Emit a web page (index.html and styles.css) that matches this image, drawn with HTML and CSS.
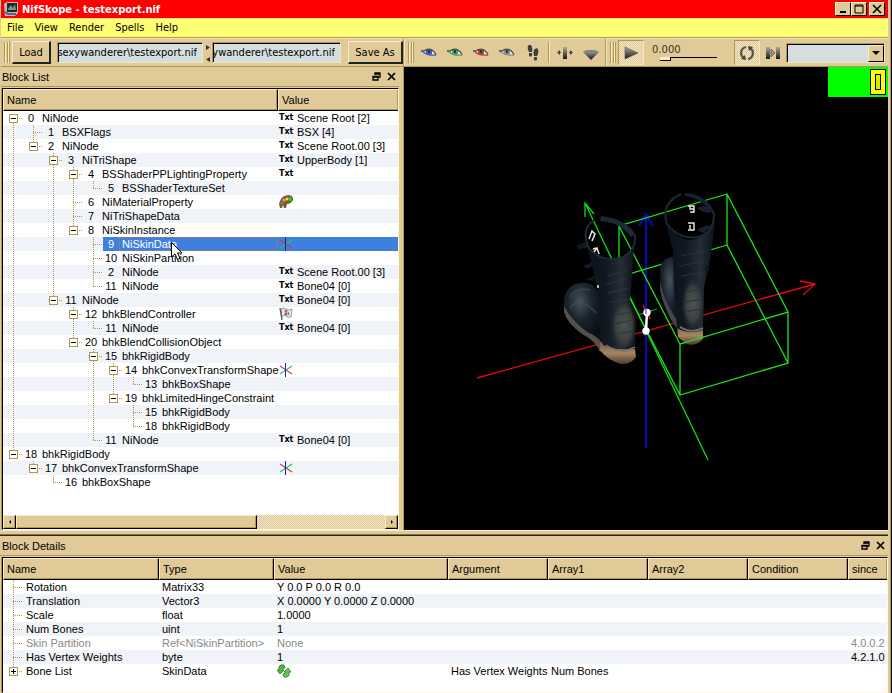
FILE: index.html
```html
<!DOCTYPE html>
<html lang="en">
<head>
    <meta charset="UTF-8">
    <meta name="viewport" content="width=device-width, initial-scale=1.0">
    <title>NifSkope - testexport.nif</title>
    <link rel="stylesheet" href="styles.css">
</head>
<body>
<svg width="0" height="0" class="defs">
    <symbol id="eye" viewBox="0 0 16 10">
        <path d="M1 3Q7 0 12 3L15 7Q8 8 4 6Z" fill="#e4e8ec"/>
        <path d="M5 2H11V6Q8 8 5 6Z" fill="currentColor"/>
        <path d="M0 3H3Q7 0 11 2Q14 4 15 7" fill="none" stroke="#454848" stroke-width="1.3"/>
        <path d="M2 4Q7 8 15 7" fill="none" stroke="currentColor" stroke-width="1.3"/>
        <path d="M7 2H9V5H7Z" fill="#333"/>
    </symbol>
    <symbol id="float" viewBox="0 0 9 9">
        <path d="M3 3V1H8V5H6M3 2H8M1 4.500H6V8H1ZM1 5H6" fill="none" stroke="#000" stroke-width="1.300"/>
    </symbol>
    <symbol id="close" viewBox="0 0 9 9">
        <path d="M1 1L8 8M8 1L1 8" stroke="#000" stroke-width="1.700"/>
    </symbol>
    <symbol id="axes" viewBox="0 0 14 14">
        <path d="M1 3L13 11" stroke="#e03050" stroke-width="1.200"/>
        <path d="M1 11L13 3" stroke="#20c860" stroke-width="1.200"/>
        <path d="M6.500 0V14" stroke="#2020b8"/>
    </symbol>
    <symbol id="palette" viewBox="0 0 14 14">
        <path d="M1 6Q3 0 10 0Q15 1 14 5Q12 9 8 9L7 13H5L4 10L3 13H1L0 9Z" fill="#7b5c28"/>
        <circle cx="3" cy="8" r="1.500" fill="#5588a0"/>
        <circle cx="5" cy="5" r="1.500" fill="#ef9a90"/>
        <circle cx="8" cy="4" r="1.500" fill="#f3e230"/>
        <circle cx="11" cy="4" r="2" fill="#35c835"/>
    </symbol>
    <symbol id="flag" viewBox="0 0 14 14">
        <path d="M2 2Q5 0 7 2T13 2L12 10Q9 11 7 9T3 10Z" fill="#e4e4e4" stroke="#888" stroke-width=".8"/>
        <path d="M1 1L3 13" stroke="#555" stroke-width="1.300"/>
        <circle cx="7" cy="4" r="1.500" fill="#dc6a30"/>
        <circle cx="7" cy="7" r="1.500" fill="#4870c0"/>
        <path d="M9 5L10 8" stroke="#c84040"/>
    </symbol>
    <symbol id="refresh" viewBox="0 0 14 14">
        <path d="M7 1Q1 0 2 6H0L3 10L7 6H5Q5 4 8 4Z" fill="#4eb83e" stroke="#237b1c" stroke-width=".8"/>
        <path d="M7 13Q13 14 12 8H14L11 4L7 8H9Q9 10 6 10Z" fill="#66c856" stroke="#237b1c" stroke-width=".8"/>
    </symbol>
</svg>

<div class="window">
    <header class="titlebar">
        <svg class="app-icon" viewBox="0 0 16 16">
            <path d="M1 3L4 1H15V12L12 15H2Z" fill="#b8bccb"/>
            <path d="M4 2H14V11H4Z" fill="#202824"/>
            <path d="M5 8L8 4L10 7L12 3L13 9H5Z" fill="#7e9489"/>
            <path d="M2 11L5 13H13" fill="none" stroke="#626079" stroke-width="2"/>
        </svg>
        <h1>NifSkope - testexport.nif</h1>
        <button class="win-btn" aria-label="Minimize"><svg viewBox="0 0 10 10"><path d="M2 8H8" stroke="#000" stroke-width="2"/></svg></button>
        <button class="win-btn" aria-label="Maximize"><svg viewBox="0 0 10 10"><path d="M1 1H9V9H1ZM1 2H9" fill="none" stroke="#000"/></svg></button>
        <button class="win-btn close" aria-label="Close"><svg viewBox="0 0 10 10"><path d="M1 1L9 9M9 1L1 9" stroke="#000" stroke-width="1.600"/></svg></button>
    </header>

    <nav class="menubar">
        <a href="#">File</a>
        <a href="#">View</a>
        <a href="#">Render</a>
        <a href="#">Spells</a>
        <a href="#">Help</a>
    </nav>

    <div class="toolbars">
        <div class="toolbar files">
            <span class="grip"></span>
            <button class="push">Load</button>
            <input class="path" type="text" aria-label="Load path" value="sexywanderer\testexport.nif">
            <svg class="swap" viewBox="0 0 6 20"><path d="M1 2L5 4.500L1 7ZM5 14L1 16.500L5 19Z" fill="#333"/></svg>
            <input class="path save" type="text" aria-label="Save path" value="sexywanderer\testexport.nif">
            <button class="push save-as">Save As</button>
        </div>
        <div class="toolbar render">
            <span class="grip"></span>
            <button class="tool" aria-label="View top"><svg class="eye blue"><use href="#eye"/></svg></button>
            <button class="tool" aria-label="View front"><svg class="eye green"><use href="#eye"/></svg></button>
            <button class="tool" aria-label="View side"><svg class="eye red"><use href="#eye"/></svg></button>
            <button class="tool" aria-label="View user"><svg class="eye gray"><use href="#eye"/></svg></button>
            <button class="tool" aria-label="Walk">
                <svg viewBox="0 0 16 16"><path d="M3 1Q4-1 6 0Q8 3 7 7H4Q2 4 3 1ZM4 8H7L7 11Q5 12 4 11ZM9 5Q11 2 13 4Q14 8 12 11H9Q8 8 9 5ZM9 12H12V15Q10 16 9 15Z" fill="#40403a"/></svg>
            </button>
            <span class="sep"></span>
            <button class="tool" aria-label="Flip">
                <svg viewBox="0 0 16 16">
                    <path d="M6 2H10V14H6Z" fill="url(#metal)"/>
                    <path d="M4 7.500H1M12 7.500H15" stroke="#444"/>
                    <path d="M3 5L0 7.500L3 10ZM13 5L16 7.500L13 10Z" fill="#444"/>
                </svg>
            </button>
            <button class="tool" aria-label="Perspective">
                <svg viewBox="0 0 16 16"><path d="M0 7L4 5H12L16 7L8 15Z" fill="url(#metal)"/><path d="M0 7L4 5H12L16 7L8 9Z" fill="#86867e"/></svg>
            </button>
        </div>
        <div class="toolbar anim">
            <span class="grip"></span>
            <button class="tool checked" aria-label="Play">
                <svg viewBox="0 0 16 16"><path d="M2 2L15 8L2 14Z" fill="url(#metal)" stroke="#555" stroke-width=".6"/></svg>
            </button>
            <div class="time">
                <label for="time">0.000</label>
                <input id="time" type="range" min="0" max="100" value="0">
            </div>
            <button class="tool checked" aria-label="Loop">
                <svg viewBox="0 0 16 16">
                    <path d="M7 2A6 6 0 0 0 5 13M9 14A6 6 0 0 0 11 3" fill="none" stroke="#55554f" stroke-width="2.200"/>
                    <path d="M2 14L7 15L6 10ZM14 2L9 1L10 6Z" fill="#44443f"/>
                </svg>
            </button>
            <button class="tool" aria-label="Switch">
                <svg viewBox="0 0 16 16"><path d="M1 2H5V14H1ZM11 2H15V14H11Z" fill="url(#metal)"/><path d="M6 4L10 8L6 12Z" fill="#99998a" stroke="#555" stroke-width=".8"/></svg>
            </button>
            <span class="combo">
                <select aria-label="Animation group"><option></option></select>
                <span class="combo-arrow"></span>
            </span>
        </div>
    </div>

    <main>
        <section class="dock block-list">
            <div class="dock-title">
                <h2>Block List</h2>
                <button class="dock-btn" aria-label="Float"><svg><use href="#float"/></svg></button>
                <button class="dock-btn" aria-label="Close"><svg><use href="#close"/></svg></button>
            </div>
            <div class="frame">
                <div class="scroll">
                    <table class="view">
                        <colgroup><col><col class="list-value"></colgroup>
                        <thead><tr><th>Name</th><th>Value</th></tr></thead>
                        <tbody id="blocks"></tbody>
                    </table>
                </div>
                <div class="scrollbar">
                    <button class="arrow left" aria-label="Scroll left"></button>
                    <span class="thumb"></span>
                    <span class="track"></span>
                    <button class="arrow right" aria-label="Scroll right"></button>
                </div>
            </div>
        </section>

        <section class="viewport">
            <svg class="scene" viewBox="404 67 484 463">
                <defs>
                    <linearGradient id="metal" x1="0" y1="0" x2="0" y2="1">
                        <stop offset="0" stop-color="#aaa9a0"/><stop offset="1" stop-color="#171717"/>
                    </linearGradient>
                    <linearGradient id="shaft" x1="0" y1="0" x2="1" y2="0">
                        <stop offset="0" stop-color="#0c121c"/><stop offset=".4" stop-color="#121822"/>
                        <stop offset=".7" stop-color="#262d37"/><stop offset="1" stop-color="#0b1019"/>
                    </linearGradient>
                    <linearGradient id="heel" x1="0" y1="0" x2="0" y2="1">
                        <stop offset="0" stop-color="#6e5a4a"/><stop offset=".5" stop-color="#a98662"/><stop offset="1" stop-color="#4a392c"/>
                    </linearGradient>
                    <radialGradient id="toe" cx=".4" cy=".3" r=".6">
                        <stop offset="0" stop-color="#46525e"/><stop offset=".5" stop-color="#1b232d"/><stop offset="1" stop-color="#0b1017"/>
                    </radialGradient>
                    <radialGradient id="ankle">
                        <stop offset="0" stop-color="#4c524f"/><stop offset=".6" stop-color="#3a403f"/><stop offset="1" stop-color="#1a2029" stop-opacity="0"/>
                    </radialGradient>
                </defs>

                <!-- axes -->
                <g fill="none" stroke-width="1.300">
                    <path d="M477 378L815 284M800 281L815 284L803 295" stroke="#e80808"/>
                    <path d="M585 203L708 460M585 217V203L594 214" stroke="#08e010"/>
                    <path d="M646 214V448M639 226L646 214L653 226" stroke="#0808c0" stroke-width="2"/>
                </g>
                <!-- bounding box -->
                <path d="M727 194L619 226L680 344L788 312ZM727 245L619 277L680 395L788 363ZM727 194V245M619 226V277M680 344V395M788 312V363" fill="none" stroke="#18e818" stroke-width="1.300"/>

                <!-- left boot -->
                <g>
                    <path d="M586 242L577 245L578 249L590 248M592 262L583 266L587 269L595 265M595 276L586 279L589 281L598 278" fill="#101822"/>
                    <path d="M564 299Q567 284 580 283Q592 281 598 291L604 320L602 346L588 337Q569 324 564 309Z" fill="url(#toe)"/>
                    <path d="M564 306Q570 319 587 332Q600 337 605 348L600 352Q596 341 582 334Q567 323 564 312Z" fill="#55504e"/>
                    <path d="M600 342Q613 351 635 349L636 357Q630 365 621 364Q607 360 600 350Z" fill="url(#heel)"/>
                    <path d="M587 246Q593 258 609 260Q627 259 634 246L630 302L632 320L636 345Q621 353 603 345L598 320V291Z" fill="url(#shaft)"/>
                    <ellipse cx="624" cy="325" rx="14" ry="28" fill="url(#ankle)"/>
                    <path d="M606 345Q620 355 635 347" fill="none" stroke="#77756b" stroke-width="1.500"/>
                    <path d="M607 276L627 270M606 284L627 279M608 293L628 288M610 302L628 299M616 315L632 312M614 324L633 320M616 334L634 331" stroke="#2c343e"/>
                    <path d="M594 220Q580 230 589 248Q600 262 620 258Q636 252 635 236Q629 222 601 218" fill="none" stroke="#1d2a38" stroke-width="2"/>
                    <path d="M601 216Q627 219 634 235L631 237Q620 222 600 221Z" fill="#1b2938"/>
                    <path d="M589 239L592 231L595 234L592 241M594 252L597 248L599 254M593 249L596 248M598 285V288" fill="none" stroke="#e8eaea" stroke-width="1.500"/>
                    <path d="M570 297Q576 287 590 290M570 308Q580 295 596 313" fill="none" stroke="#3f4c58" stroke-width="2" opacity=".6"/>
                </g>

                <!-- right boot -->
                <g>
                    <path d="M660 270Q661 258 673 257L684 285L684 336L671 320L661 292Z" fill="url(#toe)"/>
                    <path d="M660 282Q664 302 679 323L682 333L675 326Q663 307 660 290Z" fill="#44444a"/>
                    <path d="M677 326Q690 332 703 328V339Q696 347 686 344L678 337Z" fill="url(#heel)"/>
                    <path d="M666 224Q676 239 691 240Q706 238 715 222L710 260L704 287L703 330Q689 335 677 328L674 290L673 251Z" fill="url(#shaft)"/>
                    <path d="M706 266L710 268L708 271L704 270Z" fill="#101822"/>
                    <ellipse cx="693" cy="304" rx="12" ry="28" fill="url(#ankle)"/>
                    <path d="M680 327Q692 334 703 328" fill="none" stroke="#77756b" stroke-width="1.500"/>
                    <path d="M681 256L704 251M681 266L704 261M682 276L703 272M685 292L702 289M684 302L702 299M685 312L702 309" stroke="#29313b"/>
                    <path d="M681 194Q660 204 667 224Q679 240 698 237Q714 233 714 214Q707 197 685 194" fill="none" stroke="#1b2838" stroke-width="2"/>
                    <path d="M685 193Q704 194 712 208L709 209Q698 197 685 196ZM697 208Q706 203 712 212Q705 214 697 208M697 230Q707 224 711 226L704 233Z" fill="#152231"/>
                    <path d="M688 206H694V212H690M690 206V209H694M688 223H694V230H688M690 225V229" fill="none" stroke="#e8eaea" stroke-width="1.400"/>
                </g>
                <path d="M680 344L704 337" stroke="#18e818" stroke-width="1.300"/>

                <!-- selected node -->
                <path d="M638 315L657 309" stroke="#08c010"/>
                <path d="M643 305L650 319" stroke="#e01020" stroke-width="1.500"/>
                <path d="M647 312L646 331" stroke="#fff" stroke-width="2.500"/>
                <circle cx="647" cy="312.500" r="3.700" fill="#fff"/>
                <circle cx="646" cy="331" r="3.700" fill="#fff"/>
                <path d="M646 309V314" stroke="#2020c0"/>
            </svg>
            <svg class="counter" viewBox="0 0 60 30">
                <rect width="60" height="30" fill="#0f0"/>
                <rect x="42.500" y="2.500" width="15" height="25" fill="#ff0" stroke="#000"/>
                <rect x="47.500" y="7.500" width="5" height="15" fill="#dcec00" stroke="#000"/>
            </svg>
        </section>
    </main>

    <section class="dock block-details">
        <div class="dock-title">
            <h2>Block Details</h2>
            <button class="dock-btn" aria-label="Float"><svg><use href="#float"/></svg></button>
            <button class="dock-btn" aria-label="Close"><svg><use href="#close"/></svg></button>
        </div>
        <div class="frame">
            <table class="view">
                <colgroup>
                    <col class="d-name"><col class="d-type"><col><col class="d-arg"><col class="d-arg"><col class="d-arg"><col class="d-arg"><col class="d-since">
                </colgroup>
                <thead>
                    <tr><th>Name</th><th>Type</th><th>Value</th><th>Argument</th><th>Array1</th><th>Array2</th><th>Condition</th><th>since</th></tr>
                </thead>
                <tbody>
                    <tr><td><div class="node"><span class="guide up down across"></span>Rotation</div></td><td>Matrix33</td><td>Y 0.0 P 0.0 R 0.0</td><td></td><td></td><td></td><td></td><td></td></tr>
                    <tr><td><div class="node"><span class="guide up down across"></span>Translation</div></td><td>Vector3</td><td>X 0.0000 Y 0.0000 Z 0.0000</td><td></td><td></td><td></td><td></td><td></td></tr>
                    <tr><td><div class="node"><span class="guide up down across"></span>Scale</div></td><td>float</td><td>1.0000</td><td></td><td></td><td></td><td></td><td></td></tr>
                    <tr><td><div class="node"><span class="guide up down across"></span>Num Bones</div></td><td>uint</td><td>1</td><td></td><td></td><td></td><td></td><td></td></tr>
                    <tr class="disabled"><td><div class="node"><span class="guide up down across"></span>Skin Partition</div></td><td>Ref&lt;NiSkinPartition&gt;</td><td>None</td><td></td><td></td><td></td><td></td><td>4.0.0.2</td></tr>
                    <tr><td><div class="node"><span class="guide up down across"></span>Has Vertex Weights</div></td><td>byte</td><td>1</td><td></td><td></td><td></td><td></td><td>4.2.1.0</td></tr>
                    <tr><td><div class="node"><span class="guide up across"><i class="box plus"></i></span>Bone List</div></td><td>SkinData</td><td><svg class="icon"><use href="#refresh"/></svg></td><td>Has Vertex Weights</td><td>Num Bones</td><td></td><td></td><td></td></tr>
                </tbody>
            </table>
        </div>
    </section>
</div>
<script src="script.js"></script>
</body>
</html>
```
FILE: styles.css
```css
* {
    box-sizing: border-box;
}

body {
    margin: 0;
    background: #e0cb98;
    border-right: 1px solid #000;
    font-family: "DejaVu Sans Condensed", "DejaVu Sans", sans-serif;
    font-size: 11px;
    color: #000;
    overflow: hidden;
}

button,
input,
select {
    margin: 0;
    padding: 0;
    border: none;
    border-radius: 0;
    background: none;
    font: inherit;
    color: inherit;
    outline: none;
}

h1,
h2 {
    flex: 1;
    margin: 0;
    font-size: 11px;
    font-weight: normal;
}

.defs {
    position: absolute;
}

.window {
    display: flex;
    flex-direction: column;
    height: 100vh;
    padding: 0 2px 0 1px;
    border-right: 1px solid #b3964f;
}

/* title bar and menu */
.titlebar {
    display: flex;
    align-items: center;
    height: 18px;
    padding: 0 3px 0 2px;
    background: #f00;
    color: #fff;
}

.titlebar h1 {
    padding-left: 3px;
    font-weight: bold;
}

.app-icon {
    width: 16px;
    height: 16px;
}

.win-btn {
    display: flex;
    align-items: center;
    justify-content: center;
    width: 16px;
    height: 14px;
    background: #e0cb98;
    border: 1px solid #fff3d0;
    border-right-color: #000;
    border-bottom-color: #000;
}

.win-btn.close {
    margin-left: 2px;
}

.win-btn svg {
    width: 10px;
    height: 10px;
}

.menubar {
    display: flex;
    gap: 11px;
    height: 20px;
    padding: 0 6px;
    background: #ffff73;
    border-top: 1px solid #f4d878;
    border-bottom: 1px solid #b3964f;
    line-height: 18px;
}

.menubar a {
    color: #000;
    text-decoration: none;
}

/* toolbars */
.toolbars {
    display: flex;
    height: 29px;
    border-bottom: 1px solid #b3964f;
}

.toolbar {
    display: flex;
    align-items: center;
    border-top: 1px solid #f2e6c0;
    border-right: 1px solid #b3964f;
    padding-left: 3px;
}

.toolbar.files {
    width: 403px;
    flex: none;
}

.toolbar.render {
    width: 202px;
    flex: none;
    border-left: 1px solid #f2e6c0;
}

.toolbar.anim {
    flex: 1;
    padding-right: 3px;
    border-left: 1px solid #f2e6c0;
    border-right: none;
}

.grip {
    flex: none;
    width: 6px;
    height: 21px;
    margin-right: 2px;
    border: solid #b3964f;
    border-width: 0 1px;
    background: linear-gradient(90deg, #f8edc8 1px, transparent 1px 2px, #b3964f 2px 3px, #f8edc8 3px);
}

.push {
    width: 39px;
    height: 23px;
    background: #e0cb98;
    border: 1px solid #f8edc8;
    border-right: 2px solid #222;
    border-bottom: 2px solid #222;
}

.push.save-as {
    width: 55px;
    margin-left: 7px;
}

.path {
    width: 146px;
    height: 21px;
    margin-left: 6px;
    padding-right: 5px;
    background: #d5dedf;
    border: 1px solid #f2e6c0;
    border-top-color: #b3964f;
    border-left-color: #b3964f;
    box-shadow: inset 1px 1px #000;
    direction: rtl;
}

.path.save {
    width: 129px;
    margin-left: 1px;
}

.swap {
    width: 6px;
    height: 20px;
    margin-left: 2px;
}

.tool {
    flex: none;
    display: flex;
    align-items: center;
    justify-content: center;
    width: 26px;
    height: 25px;
}

.tool svg {
    width: 16px;
    height: 16px;
}

.tool svg.eye {
    height: 10px;
}

.eye.blue {
    color: #3c5fc0;
}

.eye.green {
    color: #3fa368;
}

.eye.red {
    color: #c03a36;
}

.eye.gray {
    color: #888a84;
}

.tool.checked,
.track {
    background: repeating-conic-gradient(#f0e4c4 0 25%, #e0cb98 0 50%) 0 0 / 2px 2px;
}

.tool.checked {
    border: 1px solid #f2e6c0;
    border-top-color: #b3964f;
    border-left-color: #b3964f;
}

.sep {
    width: 2px;
    height: 21px;
    margin: 0 2px;
    background: #b3964f;
    border-right: 1px solid #f8edc8;
}

.time {
    display: flex;
    flex-direction: column;
    flex: none;
    width: 90px;
    padding-left: 8px;
    font-family: "DejaVu Sans", sans-serif;
    font-size: 10px;
    line-height: 12px;
    color: #3d3527;
}

.time input {
    appearance: none;
    width: 57px;
    height: 5px;
    margin-left: 8px;
    background: linear-gradient(#000, #000) 0 1px / 100% 1px no-repeat;
}

.time input::-webkit-slider-thumb {
    appearance: none;
    width: 11px;
    height: 4px;
    background: #f8edc8;
    border: solid #000;
    border-width: 0 1px 1px 0;
}

.combo {
    position: relative;
    flex: 1;
    height: 20px;
}

.combo select {
    display: block;
    appearance: none;
    width: 100%;
    height: 20px;
    background: #d5dedf;
    border: 1px solid #f2e6c0;
    border-top-color: #b3964f;
    border-left-color: #b3964f;
    box-shadow: inset 1px 1px #000;
}

.combo-arrow {
    position: absolute;
    top: 2px;
    right: 1px;
    width: 16px;
    height: 17px;
    background: #e0cb98;
    border: 1px solid #f8edc8;
    border-right-color: #000;
    border-bottom-color: #000;
}

.combo-arrow::after {
    content: "";
    position: absolute;
    top: 5px;
    left: 3px;
    border: 4px solid transparent;
    border-top-color: #000;
    border-bottom: none;
}

/* docks */
main {
    display: flex;
    flex: 1;
    min-height: 0;
}

.dock {
    display: flex;
    flex-direction: column;
    font-family: "Liberation Sans", Arial, sans-serif;
}

.block-list {
    flex: none;
    width: 403px;
    padding-right: 4px;
    border-right: 1px solid #b3964f;
}

.dock-title {
    display: flex;
    flex: none;
    align-items: center;
    height: 20px;
    padding: 0 0 0 1px;
    border-bottom: 1px solid #b3964f;
}

.dock-btn {
    width: 15px;
    height: 15px;
}

.dock-btn svg {
    display: block;
    width: 9px;
    height: 9px;
    margin: 2px 3px;
}

.frame {
    display: flex;
    flex-direction: column;
    flex: 1;
    min-height: 0;
    margin-top: 1px;
    margin-left: 1px;
    background: #fff;
    border-top: 1px solid #000;
    border-left: 1px solid #000;
    border-right: 1px solid #fff8e0;
    border-bottom: 1px solid #fff8e0;
    box-shadow: -1px 0 #b3964f;
}

.scroll {
    flex: 1;
    min-height: 0;
    overflow: hidden;
}

.view {
    width: 100%;
    table-layout: fixed;
    border-spacing: 0;
}

.view th {
    height: 22px;
    padding: 0 3px;
    background: #e0cb98;
    border-top: 1px solid #f8edc8;
    border-left: 1px solid #f8edc8;
    border-right: 1px solid #000;
    border-bottom: 1px solid #000;
    box-shadow: inset -1px -1px #b3964f;
    font-weight: normal;
    text-align: left;
}

.view th:last-child {
    border-right: none;
}

.view td {
    height: 14px;
    padding: 0 3px;
    line-height: 14px;
    white-space: nowrap;
}

.view td:first-child {
    padding: 0;
}

.view tbody tr:nth-child(even) {
    background: #f0f3f8;
}

.view .disabled {
    color: #888;
}

.list-value {
    width: 120px;
}

.d-name {
    width: 156px;
}

.d-type {
    width: 115px;
}

.d-arg {
    width: 100px;
}

.d-since {
    width: 39px;
}

/* tree branches */
.node {
    display: flex;
    height: 14px;
}

.guide {
    --dots-v: repeating-linear-gradient(#b3964f 0 1px, transparent 1px 2px);
    --dots-h: repeating-linear-gradient(90deg, #b3964f 0 1px, transparent 1px 2px);
    flex: none;
    width: 20px;
    height: 14px;
    padding: 3px 0 0 6px;
    background-repeat: no-repeat;
}

.block-details .guide {
    margin-right: 3px;
}

.guide.through {
    background-image: var(--dots-v);
    background-position: 10px 0;
    background-size: 1px 14px;
}

.guide.across {
    background-image: var(--dots-v), var(--dots-h);
    background-position: 10px 0, 10px 7px;
    background-size: 1px 7px, 9px 1px;
}

.guide.up.down {
    background-size: 1px 14px, 9px 1px;
}

.guide.down:not(.up) {
    background-position: 10px 8px, 10px 7px;
}

.box {
    display: block;
    width: 9px;
    height: 9px;
    border: 1px solid #b3964f;
    background: linear-gradient(#000, #000) center / 5px 1px no-repeat #fff;
}

.box.plus {
    background: linear-gradient(#000, #000) center / 5px 1px no-repeat,
        linear-gradient(#000, #000) center / 1px 5px no-repeat #fff;
}

.number {
    flex: none;
    width: 16px;
    text-align: center;
}

.name {
    flex: 1;
    padding-left: 3px;
}

.selected .number,
.selected .name,
.selected td:last-child {
    background: #3d80df;
    color: #fff;
}

.selected .name {
    position: relative;
    outline: 1px dotted #c07f20;
    outline-offset: -1px;
}

.pointer {
    position: absolute;
    top: 5px;
    left: 52px;
    width: 12px;
    height: 18px;
}

.value {
    display: flex;
    align-items: center;
    gap: 4px;
    height: 14px;
}

.view .value-cell {
    padding: 0 1px;
}

.txt {
    width: 14px;
    font-family: "DejaVu Sans", sans-serif;
    font-size: 8px;
    font-weight: bold;
}

.icon {
    display: block;
    width: 14px;
    height: 14px;
}

/* horizontal scroll bar */
.scrollbar {
    display: flex;
    flex: none;
    height: 14px;
}

.thumb,
.arrow {
    background: #e0cb98;
    border: 1px solid #f8edc8;
    border-right-color: #000;
    border-bottom-color: #000;
    box-shadow: inset -1px -1px #b3964f;
}

.arrow {
    display: flex;
    align-items: center;
    justify-content: center;
    width: 13px;
}

.arrow::after {
    content: "";
    border: 2px solid transparent;
}

.arrow.left::after {
    border-right-color: #000;
    border-left: none;
}

.arrow.right::after {
    border-left-color: #000;
    border-right: none;
}

.thumb {
    width: 61%;
}

.track {
    flex: 1;
}

/* 3D view */
.viewport {
    position: relative;
    flex: 1;
    min-width: 0;
    background: #000;
}

.scene {
    display: block;
    width: 100%;
    height: 100%;
}

.counter {
    position: absolute;
    top: 0;
    right: 0;
    width: 60px;
    height: 30px;
}

.block-details {
    flex: none;
    height: 163px;
    border-top: 1px solid #f8edc8;
}

.block-details .dock-title {
    height: 25px;
    margin-left: -1px;
    padding-left: 2px;
    padding-top: 5px;
    background: linear-gradient(#b3964f, #000) 0 3px / 100% 2px no-repeat;
}
```
FILE: script.js
```javascript
// [level, number, name, value]
const blocks = [
    [0, 0, 'NiNode', 'Scene Root [2]'],
    [1, 1, 'BSXFlags', 'BSX [4]'],
    [1, 2, 'NiNode', 'Scene Root.00 [3]'],
    [2, 3, 'NiTriShape', 'UpperBody [1]'],
    [3, 4, 'BSShaderPPLightingProperty', ' '],
    [4, 5, 'BSShaderTextureSet', ''],
    [3, 6, 'NiMaterialProperty', '#palette'],
    [3, 7, 'NiTriShapeData', ''],
    [3, 8, 'NiSkinInstance', ''],
    [4, 9, 'NiSkinData', '#axes'],
    [4, 10, 'NiSkinPartition', ''],
    [4, 2, 'NiNode', 'Scene Root.00 [3]'],
    [4, 11, 'NiNode', 'Bone04 [0]'],
    [2, 11, 'NiNode', 'Bone04 [0]'],
    [3, 12, 'bhkBlendController', '#flag'],
    [4, 11, 'NiNode', 'Bone04 [0]'],
    [3, 20, 'bhkBlendCollisionObject', ''],
    [4, 15, 'bhkRigidBody', ''],
    [5, 14, 'bhkConvexTransformShape', '#axes'],
    [6, 13, 'bhkBoxShape', ''],
    [5, 19, 'bhkLimitedHingeConstraint', ''],
    [6, 15, 'bhkRigidBody', ''],
    [6, 18, 'bhkRigidBody', ''],
    [4, 11, 'NiNode', 'Bone04 [0]'],
    [0, 18, 'bhkRigidBody', ''],
    [1, 17, 'bhkConvexTransformShape', '#axes'],
    [2, 16, 'bhkBoxShape', '']
];
const selected = 9;

// true if another row follows under the same parent at this level
function hasNext(index, level) {
    for (let i = index + 1; i < blocks.length; i++) {
        if (blocks[i][0] < level) return false;
        if (blocks[i][0] === level) return true;
    }
    return false;
}

function guides(index) {
    const level = blocks[index][0];
    let html = '';
    for (let l = 0; l < level; l++) {
        html += `<span class="guide ${hasNext(index, l) ? 'through' : ''}"></span>`;
    }
    const next = blocks[index + 1];
    const box = next && next[0] > level ? '<i class="box"></i>' : '';
    const up = index > 0 ? 'up' : '';
    const down = hasNext(index, level) ? 'down' : '';
    return html + `<span class="guide ${up} ${down} across">${box}</span>`;
}

function valueHtml(value) {
    if (!value) return '';
    if (value[0] === '#') return `<svg class="icon"><use href="${value}"/></svg>`;
    return `<span class="txt">Txt</span><span>${value}</span>`;
}

const pointer = '<svg class="pointer" viewBox="0 0 12 18"><path d="M.5 .5V15L4 12L6.500 17.500L9 16.500L6.500 11H11Z" fill="#fff" stroke="#000"/></svg>';

document.getElementById('blocks').innerHTML = blocks.map(([level, number, name, value], i) => `
    <tr class="${i === selected ? 'selected' : ''}">
        <td><div class="node">${guides(i)}<span class="number">${number}</span><span class="name">${name}${i === selected ? pointer : ''}</span></div></td>
        <td class="value-cell"><div class="value">${valueHtml(value)}</div></td>
    </tr>`).join('');
```
